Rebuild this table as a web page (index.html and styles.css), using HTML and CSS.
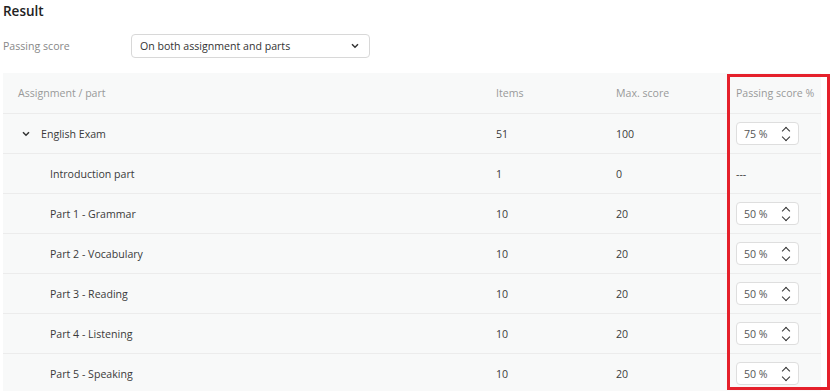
FILE: index.html
```html
<!DOCTYPE html>
<html lang="en">
  <head>
    <meta charset="UTF-8" />
    <title>Result</title>
    <link rel="stylesheet" href="styles.css">
  </head>
  <body>
    <div class="page">
      <h2 class="section-title">Result</h2>

      <div class="field-row">
        <label class="field-label">Passing score</label>
        <div class="select-box">
          <span>On both assignment and parts</span>
          <svg class="select-arrow" width="8" height="6" viewBox="0 0 8 6">
            <path d="M1 1.3 L4 4.3 L7 1.3" fill="none" stroke="#333" stroke-width="1.5" />
          </svg>
        </div>
      </div>

      <div class="score-table">
        <div class="row head">
          <div class="cell">Assignment / part</div>
          <div class="cell">Items</div>
          <div class="cell">Max. score</div>
          <div class="cell">Passing score %</div>
        </div>

        <div class="row">
          <div class="cell name parent">
            <svg class="toggle" width="8" height="6" viewBox="0 0 8 6">
              <path d="M1 1.3 L4 4.3 L7 1.3" fill="none" stroke="#333" stroke-width="1.5" />
            </svg>
            English Exam
          </div>
          <div class="cell">51</div>
          <div class="cell">100</div>
          <div class="cell"><div class="num-input"><span>75 %</span><span class="spin"></span></div></div>
        </div>

        <div class="row">
          <div class="cell name child">Introduction part</div>
          <div class="cell">1</div>
          <div class="cell">0</div>
          <div class="cell">---</div>
        </div>

        <div class="row">
          <div class="cell name child">Part 1 - Grammar</div>
          <div class="cell">10</div>
          <div class="cell">20</div>
          <div class="cell"><div class="num-input"><span>50 %</span><span class="spin"></span></div></div>
        </div>

        <div class="row">
          <div class="cell name child">Part 2 - Vocabulary</div>
          <div class="cell">10</div>
          <div class="cell">20</div>
          <div class="cell"><div class="num-input"><span>50 %</span><span class="spin"></span></div></div>
        </div>

        <div class="row">
          <div class="cell name child">Part 3 - Reading</div>
          <div class="cell">10</div>
          <div class="cell">20</div>
          <div class="cell"><div class="num-input"><span>50 %</span><span class="spin"></span></div></div>
        </div>

        <div class="row">
          <div class="cell name child">Part 4 - Listening</div>
          <div class="cell">10</div>
          <div class="cell">20</div>
          <div class="cell"><div class="num-input"><span>50 %</span><span class="spin"></span></div></div>
        </div>

        <div class="row">
          <div class="cell name child">Part 5 - Speaking</div>
          <div class="cell">10</div>
          <div class="cell">20</div>
          <div class="cell"><div class="num-input"><span>50 %</span><span class="spin"></span></div></div>
        </div>

        <div class="highlight"></div>
      </div>
    </div>
  </body>
</html>
```

FILE: styles.css
```css
* {
  box-sizing: border-box;
  margin: 0;
  padding: 0;
}

body {
  font-family: "Open Sans", "Liberation Sans", sans-serif;
  font-size: 10.6px;
  color: #3a3a3a;
  background: #fff;
}

.page {
  padding: 2px 0 0 3px;
}

.section-title {
  font-size: 13.5px;
  font-weight: 600;
  color: #222;
  line-height: 18px;
}

.field-row {
  display: flex;
  align-items: center;
  margin-top: 14px;
}

.field-label {
  width: 128px;
  color: #888;
}

.select-box {
  width: 239px;
  height: 24px;
  border: 1px solid #d8d8d8;
  border-radius: 4px;
  display: flex;
  align-items: center;
  justify-content: space-between;
  padding: 0 10px 0 8px;
  color: #333;
}

.score-table {
  position: relative;
  width: 818px;
  margin-top: 15px;
  background: #f8f9f9;
}

.row {
  display: grid;
  grid-template-columns: 478px 120px 120px 100px;
  height: 40px;
  border-bottom: 1px solid #ececec;
}

.row.head {
  height: 41px;
}

.cell {
  display: flex;
  align-items: center;
  padding-left: 15px;
}

.head .cell {
  color: #999;
}

.name.parent {
  padding-left: 19px;
}

.toggle {
  margin-right: 11px;
}

.name.child {
  padding-left: 47px;
}

.num-input {
  width: 63px;
  height: 23px;
  background: #fff;
  border: 1px solid #dedede;
  border-radius: 4px;
  display: flex;
  align-items: center;
  justify-content: space-between;
  padding: 0 8px 0 7px;
  color: #555;
}

.spin {
  width: 8px;
  height: 14px;
  position: relative;
}

.spin::before,
.spin::after {
  content: "";
  position: absolute;
  left: 1px;
  width: 5px;
  height: 5px;
  border-left: 1.5px solid #333;
  border-top: 1.5px solid #333;
}

.spin::before {
  top: 1px;
  transform: rotate(45deg);
}

.spin::after {
  bottom: 1px;
  transform: rotate(225deg);
}

.highlight {
  position: absolute;
  left: 724px;
  top: 1px;
  width: 103px;
  height: 316px;
  border: 3px solid #e5202b;
}
```
